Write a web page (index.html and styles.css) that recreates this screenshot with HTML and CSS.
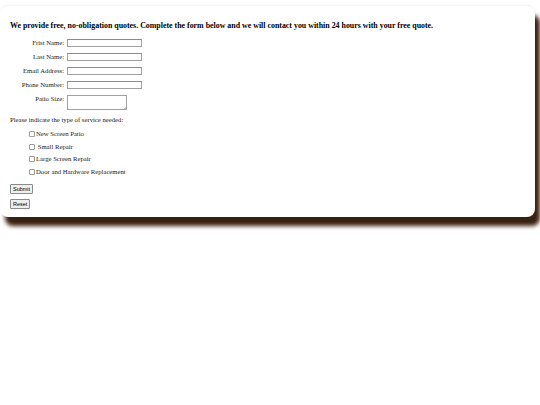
FILE: index.html
```html
<!DOCTYPE html>
<html>
<head>
<meta charset="utf-8">
<link rel="stylesheet" href="styles.css">
</head>
<body>
<div class="card">
  <h1 class="title">We provide free, no-obligation quotes. Complete the form below and we will contact you within 24 hours with your free quote.</h1>
  <form class="quote">
    <div class="fields">
      <label class="lbl">Frist Name:</label><input class="txt" type="text">
      <label class="lbl">Last Name:</label><input class="txt" type="text">
      <label class="lbl">Email Address:</label><input class="txt" type="text">
      <label class="lbl">Phone Number:</label><input class="txt" type="text">
      <label class="lbl">Patio Size:</label><textarea class="area"></textarea>
    </div>
    <p class="prompt">Please indicate the type of service needed:</p>
    <ul class="services">
      <li><span class="box"></span>New Screen Patio</li>
      <li><span class="box"></span>&nbsp;Small Repair</li>
      <li><span class="box"></span>Large Screen Repair</li>
      <li><span class="box"></span>Door and Hardware Replacement</li>
    </ul>
    <div class="buttons">
      <button type="button" class="btn">Submit</button>
      <button type="button" class="btn">Reset</button>
    </div>
  </form>
</div>
</body>
</html>
```

FILE: styles.css
```css
html, body {
  margin: 0;
  padding: 0;
  background: #ffffff;
}
body {
  font-family: "Liberation Serif", "Times New Roman", serif;
  color: #222;
  padding-bottom: 40px;
}
.card {
  position: relative;
  width: 535px;
  height: 211px;
  margin-top: 6px;
  box-sizing: border-box;
  background: #fff;
  border-radius: 8px;
  box-shadow: 5px 9px 4px #3a200f, 0 -1px 2px rgba(0,0,0,0.05);
  padding: 15px 10px 0 10px;
}
.title {
  margin: 0;
  font-size: 7.9px;
  font-weight: bold;
  line-height: 10px;
  color: #000;
}
.quote {
  margin: 0;
}
.fields {
  display: grid;
  grid-template-columns: 54px auto;
  column-gap: 3px;
  row-gap: 6px;
  justify-content: start;
  align-items: start;
  margin-top: 8px;
}
.lbl {
  text-align: right;
  font-size: 6.7px;
  line-height: 8px;
  white-space: nowrap;
}
.txt {
  width: 75px;
  height: 8px;
  box-sizing: border-box;
  margin: 0;
  padding: 0;
  border: 1px solid #a0a0a0;
  border-top-color: #8a8a8a;
  background: #fff;
}
.area {
  width: 60px;
  height: 15px;
  box-sizing: border-box;
  margin: 0;
  padding: 0;
  border: 1px solid #a0a0a0;
  background: #fff;
  resize: none;
  background-image: linear-gradient(135deg, transparent 80%, #c8c8c8 80%, #c8c8c8 85%, transparent 85%, transparent 90%, #c8c8c8 90%, #c8c8c8 95%, transparent 95%);
  background-size: 5px 5px;
  background-position: right bottom;
  background-repeat: no-repeat;
}
.prompt {
  margin: 6px 0 0 0;
  font-size: 6.7px;
  line-height: 8px;
}
.services {
  list-style: none;
  margin: 6px 0 0 0;
  padding: 0 0 0 19px;
  display: flex;
  flex-direction: column;
  gap: 4.5px;
}
.services li {
  font-size: 6.7px;
  line-height: 8px;
  display: flex;
  align-items: center;
}
.box {
  display: inline-block;
  box-sizing: content-box;
  width: 4px;
  height: 4px;
  border: 1px solid #9a9a9a;
  border-radius: 1px;
  margin-right: 1px;
}
.buttons {
  display: flex;
  flex-direction: column;
  align-items: flex-start;
  gap: 5px;
  margin-top: 8px;
}
.btn {
  font-family: "Liberation Sans", Arial, sans-serif;
  font-size: 5.5px;
  line-height: 6px;
  padding: 1px 2px;
  margin: 0;
  border: 1px solid #8a8a8a;
  background: #efefef;
  color: #000;
  border-radius: 1px;
}
```
